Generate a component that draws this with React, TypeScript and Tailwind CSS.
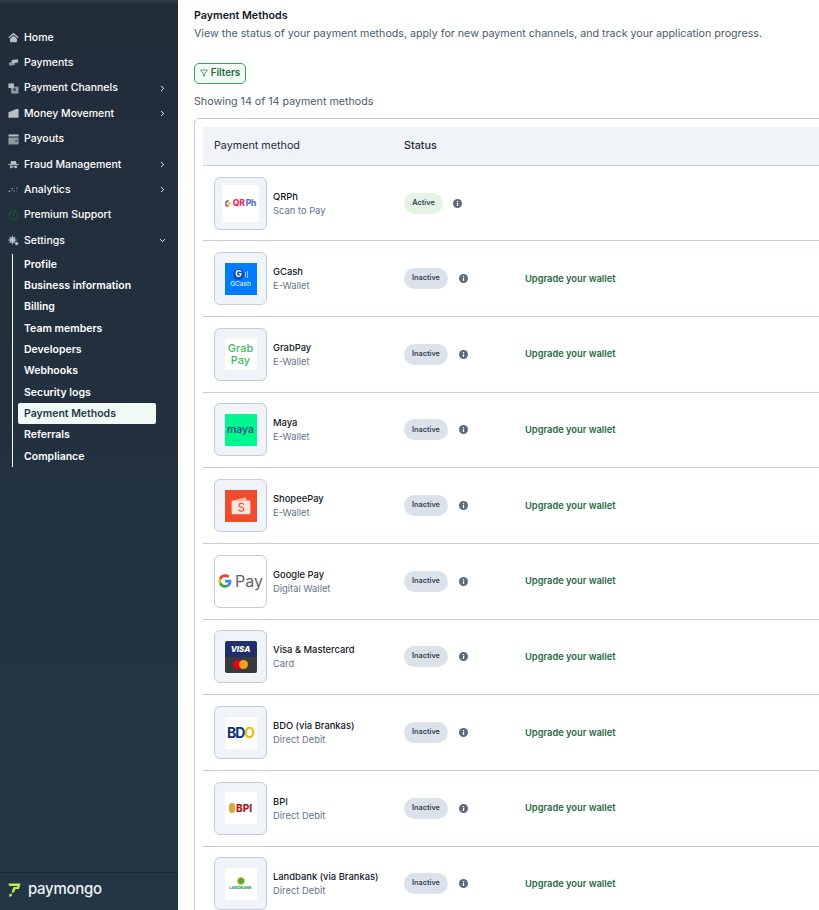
import { ChevronDown, ChevronRight, Filter } from 'lucide-react';
import type { ReactNode } from 'react';

const iconFill = '#b6bec6';

const HomeIcon = () => (
  <svg viewBox="0 0 12 12" className="w-[11px] h-[11px]" fill={iconFill}>
    <path d="M6 .8 L11.8 5.6 L10.6 6.600 L6 3 L1.4 6.600 L.2 5.600 Z" />
    <path d="M2.300 7 L6 4.100 L9.700 7 V11.200 H2.300 Z" />
  </svg>
);
const PaymentsIcon = () => (
  <svg viewBox="0 0 12 12" className="w-[11px] h-[11px]" fill={iconFill}>
    <path d="M4 3.200 L11 2.400 V6 L4 6.800 Z" />
    <path d="M1 6 L7.500 5.400 V8.800 L1 9.600 Z" opacity=".7" />
  </svg>
);
const ChannelsIcon = () => (
  <svg viewBox="0 0 12 12" className="w-[11px] h-[11px]" fill={iconFill}>
    <rect x=".5" y=".5" width="6" height="5" />
    <rect x="3.500" y="4" width="8" height="7.500" opacity=".75" />
    <rect x="6" y="6" width="2.400" height="2.400" fill="#212d3a" />
  </svg>
);
const MoneyIcon = () => (
  <svg viewBox="0 0 12 12" className="w-[11px] h-[11px]" fill={iconFill}>
    <path d="M.5 4.500 L9 1 H11.500 V10.500 H.5 Z" />
  </svg>
);
const PayoutsIcon = () => (
  <svg viewBox="0 0 12 12" className="w-[11px] h-[11px]" fill={iconFill}>
    <rect x=".5" y=".5" width="11" height="2.200" />
    <rect x=".5" y="3.800" width="11" height="7.600" opacity=".75" />
    <rect x="8" y="7" width="2" height="1.400" fill="#212d3a" />
  </svg>
);
const FraudIcon = () => (
  <svg viewBox="0 0 12 12" className="w-[11px] h-[11px]" fill={iconFill}>
    <path d="M3.400 2.200 H8.600 L9.400 5.400 H2.600 Z" />
    <rect x=".4" y="5.600" width="11.200" height="1.100" />
    <circle cx="3.600" cy="8.600" r="1.500" />
    <circle cx="8.400" cy="8.600" r="1.500" />
    <rect x="4.500" y="8" width="3" height=".8" />
  </svg>
);
const AnalyticsIcon = () => (
  <svg viewBox="0 0 12 12" className="w-[11px] h-[11px]" fill={iconFill}>
    <circle cx="1.500" cy="8" r=".8" />
    <circle cx="4.500" cy="5" r=".8" />
    <circle cx="6.500" cy="7.500" r=".7" />
    <circle cx="10" cy="4.500" r=".8" />
    <circle cx="9.200" cy="7.600" r=".5" />
    <circle cx="3.200" cy="7" r=".4" />
  </svg>
);
const SupportIcon = () => (
  <svg viewBox="0 0 12 12" className="w-[11px] h-[11px]" fill="none">
    <circle cx="6" cy="6" r="4.600" stroke="#14532d" strokeWidth="1.600" />
    <rect x="5.500" y="3.800" width="1" height="3.200" fill="#166534" />
  </svg>
);
const SettingsIcon = () => (
  <svg viewBox="0 0 12 12" className="w-[11px] h-[11px]" fill={iconFill}>
    <circle cx="4.800" cy="5.400" r="3" />
    <path d="M4.200 .8 H5.400 V10 H4.200 Z M.2 4.800 H9.400 V6 H.2 Z M1.300 2.600 L2.100 1.800 L8.300 8.200 L7.500 9 Z M7.500 1.800 L8.300 2.600 L2.100 9 L1.300 8.200 Z" />
    <circle cx="9.400" cy="9.400" r="1.800" />
  </svg>
);

const navItems = [
  { label: 'Home', icon: <HomeIcon /> },
  { label: 'Payments', icon: <PaymentsIcon /> },
  { label: 'Payment Channels', icon: <ChannelsIcon />, arrow: true },
  { label: 'Money Movement', icon: <MoneyIcon />, arrow: true },
  { label: 'Payouts', icon: <PayoutsIcon /> },
  { label: 'Fraud Management', icon: <FraudIcon />, arrow: true },
  { label: 'Analytics', icon: <AnalyticsIcon />, arrow: true },
  { label: 'Premium Support', icon: <SupportIcon /> },
];

const settingsItems = [
  'Profile',
  'Business information',
  'Billing',
  'Team members',
  'Developers',
  'Webhooks',
  'Security logs',
  'Payment Methods',
  'Referrals',
  'Compliance',
];

const GoogleG = () => (
  <svg viewBox="0 0 24 24" className="w-[14px] h-[14px] shrink-0">
    <path fill="#4285F4" d="M23 12.300c0-.8-.1-1.600-.2-2.300H12v4.400h6.200c-.3 1.400-1.100 2.600-2.300 3.400v2.900h3.700c2.200-2 3.400-5 3.400-8.400z" />
    <path fill="#34A853" d="M12 23.500c3.100 0 5.700-1 7.600-2.800l-3.700-2.900c-1 .7-2.300 1.100-3.900 1.100-3 0-5.500-2-6.400-4.700H1.800v3c1.900 3.800 5.800 6.300 10.200 6.300z" />
    <path fill="#FBBC05" d="M5.600 14.200c-.5-1.400-.5-3 0-4.400v-3H1.800c-1.600 3.200-1.600 7.200 0 10.400z" />
    <path fill="#EA4335" d="M12 5.100c1.700 0 3.200.6 4.400 1.700l3.300-3.300C17.700 1.600 15.100.5 12 .5 7.600.5 3.700 3 1.800 6.800l3.800 3c.9-2.700 3.400-4.700 6.400-4.700z" />
  </svg>
);

const methods: { name: string; sub: string; logo: ReactNode; active?: boolean; plain?: boolean }[] = [
  {
    name: 'QRPh',
    sub: 'Scan to Pay',
    active: true,
    logo: (
      <div className="w-[37px] h-[37px] bg-white flex items-center justify-center gap-px">
        <svg viewBox="0 0 8 8" className="w-[7px] h-[7px]">
          <path d="M4 .8 A3.200 3.200 0 0 0 .8 4" stroke="#3b5aa6" strokeWidth="1.600" fill="none" />
          <path d="M.8 4 A3.200 3.200 0 0 0 4 7.200" stroke="#e8326a" strokeWidth="1.600" fill="none" />
          <path d="M3 2.500 H6.500 V5.500 H3 Z" fill="#f7c52b" />
        </svg>
        <span className="text-[8.500px] font-extrabold tracking-[-0.2px] text-[#e0315f]">QR</span>
        <span className="text-[8.500px] font-extrabold tracking-[-0.2px] text-[#5a78b8]">Ph</span>
      </div>
    ),
  },
  {
    name: 'GCash',
    sub: 'E-Wallet',
    logo: (
      <div className="w-[32px] h-[32px] bg-[#007dfe] flex flex-col items-center justify-center">
        <div className="flex items-center">
          <div className="w-[11px] h-[11px] rounded-full bg-[#0a4fc4] text-white text-[8.500px] font-bold leading-[11px] text-center">G</div>
          <div className="w-px h-[5px] ml-px bg-[#9cc8ff]" />
          <div className="w-px h-[7px] ml-px bg-[#9cc8ff]" />
        </div>
        <span className="text-[6.500px] font-medium leading-[9px] text-[#dcebff]">GCash</span>
      </div>
    ),
  },
  {
    name: 'GrabPay',
    sub: 'E-Wallet',
    logo: (
      <div className="w-[32px] h-[32px] bg-white flex flex-col items-center justify-center text-[#3cb964] text-[11px] font-medium leading-[12.500px]">
        <span>Grab</span>
        <span>Pay</span>
      </div>
    ),
  },
  {
    name: 'Maya',
    sub: 'E-Wallet',
    logo: (
      <div className="w-[32px] h-[32px] bg-[#00f68f] flex items-center justify-center text-[#2d3d8f] text-[10.500px] font-medium">maya</div>
    ),
  },
  {
    name: 'ShopeePay',
    sub: 'E-Wallet',
    logo: (
      <div className="w-[32px] h-[32px] bg-[#ee4d2d] flex items-center justify-center">
        <svg viewBox="0 0 20 20" className="w-[22px] h-[22px]">
          <path d="M3 5 L14 2 L15.500 5 Z" fill="#f9b7a8" />
          <rect x="1.500" y="5" width="17" height="12.500" rx="1" fill="#ffe3dc" />
          <path d="M12.500 8.500 C11 7 8 7.300 8 9.300 C8 11.500 12.500 10.800 12.500 13 C12.500 15 9 15.200 7.500 13.500" stroke="#ee4d2d" strokeWidth="1" fill="none" />
        </svg>
      </div>
    ),
  },
  {
    name: 'Google Pay',
    sub: 'Digital Wallet',
    plain: true,
    logo: (
      <div className="flex items-center gap-[3px]">
        <GoogleG />
        <span className="text-[16px] leading-none text-[#5f6368]">Pay</span>
      </div>
    ),
  },
  {
    name: 'Visa & Mastercard',
    sub: 'Card',
    logo: (
      <div className="w-[32px] h-[32px] rounded-[2px] overflow-hidden flex flex-col">
        <div className="h-[16px] bg-[#1f2f6e] flex items-center justify-center text-white text-[8px] font-extrabold italic">VISA</div>
        <div className="h-[16px] bg-[#3a3a3a] flex items-center justify-center">
          <div className="w-[9px] h-[9px] rounded-full bg-[#e8001c]" />
          <div className="w-[9px] h-[9px] rounded-full bg-[#f79e1b] -ml-[3px]" />
        </div>
      </div>
    ),
  },
  {
    name: 'BDO (via Brankas)',
    sub: 'Direct Debit',
    logo: (
      <div className="w-[32px] h-[32px] bg-white flex items-center justify-center text-[14px] font-bold tracking-[-1px]">
        <span className="text-[#0d2f7e]">BD</span>
        <span className="text-[#f7b500]">O</span>
      </div>
    ),
  },
  {
    name: 'BPI',
    sub: 'Direct Debit',
    logo: (
      <div className="w-[32px] h-[32px] bg-white flex items-center justify-center gap-px">
        <div className="w-[6px] h-[10px] rounded-[3px] bg-[#d8a93b]" />
        <span className="text-[10px] font-extrabold text-[#a51c24]">BPI</span>
      </div>
    ),
  },
  {
    name: 'Landbank (via Brankas)',
    sub: 'Direct Debit',
    logo: (
      <div className="w-[32px] h-[32px] bg-white flex flex-col items-center justify-center">
        <div className="w-[8px] h-[8px] rounded-full bg-[#4fa83d] border border-[#e3c83a]" />
        <span className="text-[4px] font-bold leading-[6px] text-[#1c9a46]">LANDBANK</span>
      </div>
    ),
  },
];

function InfoDot() {
  return (
    <svg viewBox="0 0 10 10" className="w-[9px] h-[9px] shrink-0">
      <circle cx="5" cy="5" r="5" fill="#5b6b7c" />
      <rect x="4.300" y="4.300" width="1.400" height="3.400" fill="#fff" />
      <rect x="4.300" y="2.200" width="1.400" height="1.300" fill="#fff" />
    </svg>
  );
}

export default function App() {
  return (
    <div
      className="flex w-[819px] h-[910px] overflow-hidden bg-white text-[#111827]"
      style={{ fontFamily: 'Inter, "Liberation Sans", sans-serif' }}
    >
      <aside className="w-[178px] shrink-0 flex flex-col bg-gradient-to-b from-[#212c39] to-[#243646] border-t-[3px] border-[#2b3945]">
        <nav className="flex-1 pt-[21.800px]">
          {navItems.map((item) => (
            <div key={item.label} className="h-[25.400px] flex items-center pl-[8px] pr-[11px] text-[10.500px] font-medium text-white">
              <span className="w-[16px] flex items-center">{item.icon}</span>
              <span className="flex-1">{item.label}</span>
              {item.arrow && <ChevronRight className="w-[9px] h-[9px]" strokeWidth={2.500} />}
            </div>
          ))}
          <div className="h-[25.400px] flex items-center pl-[8px] pr-[11px] text-[10.500px] font-medium text-white">
            <span className="w-[16px] flex items-center"><SettingsIcon /></span>
            <span className="flex-1">Settings</span>
            <ChevronDown className="w-[9px] h-[9px]" strokeWidth={2.500} />
          </div>
          <div className="ml-[12px] mt-[0.400px] w-[144px] border-l border-white">
            {settingsItems.map((label) => (
              <div key={label} className="h-[21.350px] flex items-center">
                <div
                  className={`ml-[5px] w-[138px] h-[21.350px] flex items-center pl-[6px] rounded-[2px] text-[10.500px] font-semibold ${label === 'Payment Methods' ? 'bg-[#f0fbf6] text-[#1e3a4a]' : 'text-white'}`}
                >
                  {label}
                </div>
              </div>
            ))}
          </div>
        </nav>
        <div className="h-[38px] border-t border-[#1b2833] flex items-center pl-[8px] pb-[3px] gap-[7px]">
          <svg viewBox="0 0 13 14" className="w-[13px] h-[14px]" fill="#c8e65a">
            <path d="M.5 .5 H12.500 L11 6 H7.500 L6 9.500 H3.500 L5.500 4 H9 L9.500 3 H1 Z" />
            <path d="M1.800 10.800 H4.200 L3.300 13.600 H.9 Z" />
          </svg>
          <span className="pb-[4px] text-[15px] font-medium leading-none tracking-[-0.3px] text-[#eef2f5]">paymongo</span>
        </div>
      </aside>

      <main className="flex-1 min-w-0 pl-[16px] pt-[9px]">
        <h1 className="text-[10.700px] leading-[14px] font-semibold text-[#111827]">Payment Methods</h1>
        <p className="mt-[3px] text-[10.680px] leading-[16px] whitespace-nowrap text-[#4b5b6b]">
          View the status of your payment methods, apply for new payment channels, and track your application progress.
        </p>
        <button className="mt-[21px] w-[52px] h-[20.500px] flex items-center justify-center gap-[3px] rounded-[5px] border border-[#3ba55d] bg-[#f1faf4] text-[9.800px] font-semibold text-[#1f6b45]">
          <Filter className="w-[8px] h-[8px]" strokeWidth={2} />
          Filters
        </button>
        <p className="mt-[10.500px] text-[10.700px] leading-[16px] whitespace-nowrap text-[#4b5b6b]">Showing 14 of 14 payment methods</p>

        <div className="mt-[8px] w-[700px] rounded-t-[5px] border border-[#c3ccd8] pt-[8px] pl-[8px]">
          <div className="h-[38.700px] flex items-center bg-[#f0f3f7] border-b border-[#c3ccd8] text-[10.750px] text-[#1f2937]">
            <span className="w-[201px] pl-[11px]">Payment method</span>
            <span className="font-medium">Status</span>
          </div>
          {methods.map((m) => (
            <div key={m.name} className="h-[75.670px] flex items-center border-b border-[#c3ccd8]">
              <div
                className={`ml-[11px] w-[53px] h-[53px] shrink-0 rounded-[6px] border border-[#c3ccd8] flex items-center justify-center ${m.plain ? 'bg-white' : 'bg-[#f0f3f7]'}`}
              >
                {m.logo}
              </div>
              <div className="w-[137px] pl-[6px] shrink-0">
                <div className="text-[9.400px] leading-[14px] font-medium text-[#111827] whitespace-nowrap">{m.name}</div>
                <div className="text-[9.400px] leading-[13px] text-[#64748b] whitespace-nowrap">{m.sub}</div>
              </div>
              <div
                className={`h-[21px] flex items-center justify-center rounded-full text-[7.300px] font-semibold text-[#334155] ${m.active ? 'w-[39px] bg-[#e5f3e4]' : 'w-[44px] bg-[#dce2e9]'}`}
              >
                {m.active ? 'Active' : 'Inactive'}
              </div>
              <span className={m.active ? 'ml-[9.500px]' : 'ml-[11px]'}><InfoDot /></span>
              {!m.active && <span className="ml-[57px] text-[9.300px] font-semibold text-[#1f6b45] whitespace-nowrap">Upgrade your wallet</span>}
            </div>
          ))}
        </div>
      </main>
    </div>
  );
}
